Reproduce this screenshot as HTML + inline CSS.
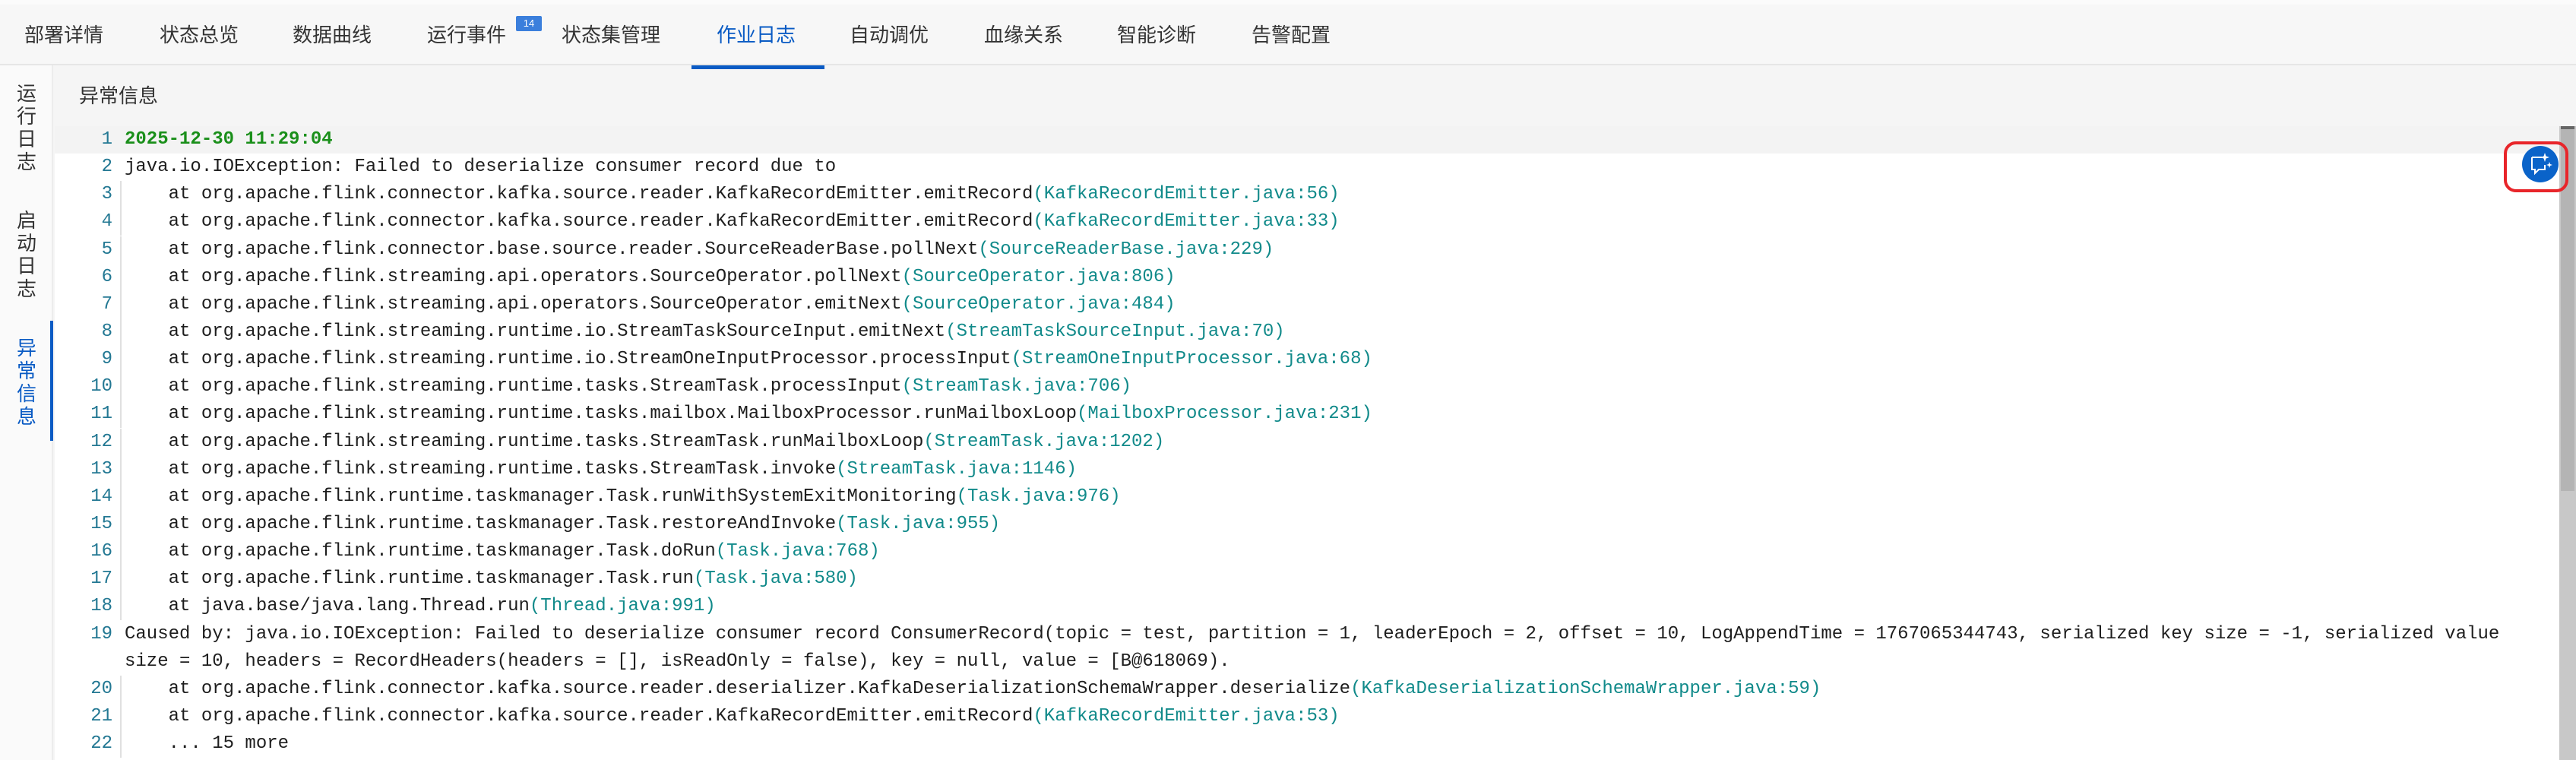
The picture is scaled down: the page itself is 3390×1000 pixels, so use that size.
<!DOCTYPE html>
<html><head><meta charset="utf-8"><style>
*{margin:0;padding:0;box-sizing:border-box}
html,body{width:3390px;height:1000px;overflow:hidden;background:#f5f5f5;font-family:"Liberation Sans","Noto Sans CJK SC",sans-serif}
.tabs{position:absolute;left:0;top:0;width:3390px;height:86px;background:#f7f7f7;border-bottom:2px solid #e6e6e6;border-top:6px solid #fbfbfb}
.tab{position:absolute;top:20px;font-size:26px;color:#333;line-height:40px;white-space:nowrap}
.tab.act{color:#0a5bc4}
.ul{position:absolute;left:910px;top:80px;width:175px;height:5px;background:#0a5bc4}
.badge{position:absolute;left:679px;top:15px;width:34px;height:20px;background:#3b7fdc;color:#fff;font-size:13px;text-align:center;line-height:20px;border-radius:2px}
.side{position:absolute;left:0;top:86px;width:70px;height:914px;background:#fafafa;border-right:2px solid #ececec}
.vt{position:absolute;left:20px;width:30px;font-size:26px;line-height:30px;color:#333;text-align:center}
.vt.act{color:#0a5bc4}
.sbar{position:absolute;left:66px;top:422px;width:4px;height:158px;background:#0a5bc4}
.hdr{position:absolute;left:104px;top:106px;font-size:26px;color:#333;line-height:40px}
.code{position:absolute;left:72px;top:166px;width:3296px;height:834px;background:#fff}
.row{position:absolute;left:0;height:36px;width:3296px;font-family:"Liberation Mono",monospace;font-size:24px;line-height:36px;white-space:pre;color:#1e1e1e}
.n{position:absolute;left:0;width:76px;text-align:right;color:#237893}
.t{position:absolute;left:92px}
.g{position:absolute;left:86px;top:0;width:2px;height:36px;background:#e0e0e0}
.l{color:#118a8a}
.r1{background:#f3f3f3}
.scroll{position:absolute;left:3368px;top:166px;width:22px;height:834px;background:#c8c8c8}
.thumb{position:absolute;left:3370px;top:166px;width:18px;height:480px;background:#b4b4b4;border-top:4px solid #666}
.ai{position:absolute;left:3295px;top:186px;width:85px;height:67px;border:4px solid #e8252a;border-radius:16px}
.aic{position:absolute;left:3319px;top:192px;width:48px;height:48px;border-radius:50%;background:#0a63c9}
</style></head><body>
<div class="tabs">
<span class="tab" style="left:32px">部署详情</span>
<span class="tab" style="left:210px">状态总览</span>
<span class="tab" style="left:385px">数据曲线</span>
<span class="tab" style="left:562px">运行事件</span>
<span class="badge">14</span>
<span class="tab" style="left:739px">状态集管理</span>
<span class="tab act" style="left:943px">作业日志</span>
<span class="tab" style="left:1118px">自动调优</span>
<span class="tab" style="left:1295px">血缘关系</span>
<span class="tab" style="left:1470px">智能诊断</span>
<span class="tab" style="left:1647px">告警配置</span>
<div class="ul"></div>
</div>
<div class="side">
<div class="vt" style="top:22px">运<br>行<br>日<br>志</div>
<div class="vt" style="top:189px">启<br>动<br>日<br>志</div>
<div class="vt act" style="top:357px">异<br>常<br>信<br>息</div>
</div>
<div class="sbar"></div>
<div class="hdr">异常信息</div>
<div class="code">
<div class="row r1" style="top:0px"><span class="n">1</span><span class="t" style="color:#1a8f1a;font-weight:bold">2025-12-30 11:29:04</span></div>
<div class="row" style="top:36.1px"><span class="n">2</span><span class="t">java.io.IOException: Failed to deserialize consumer record due to</span></div>
<div class="row" style="top:72.3px"><span class="n">3</span><span class="g"></span><span class="t">    at org.apache.flink.connector.kafka.source.reader.KafkaRecordEmitter.emitRecord<span class="l">(KafkaRecordEmitter.java:56)</span></span></div>
<div class="row" style="top:108.4px"><span class="n">4</span><span class="g"></span><span class="t">    at org.apache.flink.connector.kafka.source.reader.KafkaRecordEmitter.emitRecord<span class="l">(KafkaRecordEmitter.java:33)</span></span></div>
<div class="row" style="top:144.6px"><span class="n">5</span><span class="g"></span><span class="t">    at org.apache.flink.connector.base.source.reader.SourceReaderBase.pollNext<span class="l">(SourceReaderBase.java:229)</span></span></div>
<div class="row" style="top:180.7px"><span class="n">6</span><span class="g"></span><span class="t">    at org.apache.flink.streaming.api.operators.SourceOperator.pollNext<span class="l">(SourceOperator.java:806)</span></span></div>
<div class="row" style="top:216.8px"><span class="n">7</span><span class="g"></span><span class="t">    at org.apache.flink.streaming.api.operators.SourceOperator.emitNext<span class="l">(SourceOperator.java:484)</span></span></div>
<div class="row" style="top:253px"><span class="n">8</span><span class="g"></span><span class="t">    at org.apache.flink.streaming.runtime.io.StreamTaskSourceInput.emitNext<span class="l">(StreamTaskSourceInput.java:70)</span></span></div>
<div class="row" style="top:289.1px"><span class="n">9</span><span class="g"></span><span class="t">    at org.apache.flink.streaming.runtime.io.StreamOneInputProcessor.processInput<span class="l">(StreamOneInputProcessor.java:68)</span></span></div>
<div class="row" style="top:325.3px"><span class="n">10</span><span class="g"></span><span class="t">    at org.apache.flink.streaming.runtime.tasks.StreamTask.processInput<span class="l">(StreamTask.java:706)</span></span></div>
<div class="row" style="top:361.4px"><span class="n">11</span><span class="g"></span><span class="t">    at org.apache.flink.streaming.runtime.tasks.mailbox.MailboxProcessor.runMailboxLoop<span class="l">(MailboxProcessor.java:231)</span></span></div>
<div class="row" style="top:397.5px"><span class="n">12</span><span class="g"></span><span class="t">    at org.apache.flink.streaming.runtime.tasks.StreamTask.runMailboxLoop<span class="l">(StreamTask.java:1202)</span></span></div>
<div class="row" style="top:433.7px"><span class="n">13</span><span class="g"></span><span class="t">    at org.apache.flink.streaming.runtime.tasks.StreamTask.invoke<span class="l">(StreamTask.java:1146)</span></span></div>
<div class="row" style="top:469.8px"><span class="n">14</span><span class="g"></span><span class="t">    at org.apache.flink.runtime.taskmanager.Task.runWithSystemExitMonitoring<span class="l">(Task.java:976)</span></span></div>
<div class="row" style="top:506px"><span class="n">15</span><span class="g"></span><span class="t">    at org.apache.flink.runtime.taskmanager.Task.restoreAndInvoke<span class="l">(Task.java:955)</span></span></div>
<div class="row" style="top:542.1px"><span class="n">16</span><span class="g"></span><span class="t">    at org.apache.flink.runtime.taskmanager.Task.doRun<span class="l">(Task.java:768)</span></span></div>
<div class="row" style="top:578.2px"><span class="n">17</span><span class="g"></span><span class="t">    at org.apache.flink.runtime.taskmanager.Task.run<span class="l">(Task.java:580)</span></span></div>
<div class="row" style="top:614.4px"><span class="n">18</span><span class="g"></span><span class="t">    at java.base/java.lang.Thread.run<span class="l">(Thread.java:991)</span></span></div>
<div class="row" style="top:650.5px"><span class="n">19</span><span class="t">Caused by: java.io.IOException: Failed to deserialize consumer record ConsumerRecord(topic = test, partition = 1, leaderEpoch = 2, offset = 10, LogAppendTime = 1767065344743, serialized key size = -1, serialized value</span></div>
<div class="row" style="top:686.7px"><span class="t">size = 10, headers = RecordHeaders(headers = [], isReadOnly = false), key = null, value = [B@618069).</span></div>
<div class="row" style="top:722.8px"><span class="n">20</span><span class="g"></span><span class="t">    at org.apache.flink.connector.kafka.source.reader.deserializer.KafkaDeserializationSchemaWrapper.deserialize<span class="l">(KafkaDeserializationSchemaWrapper.java:59)</span></span></div>
<div class="row" style="top:758.9px"><span class="n">21</span><span class="g"></span><span class="t">    at org.apache.flink.connector.kafka.source.reader.KafkaRecordEmitter.emitRecord<span class="l">(KafkaRecordEmitter.java:53)</span></span></div>
<div class="row" style="top:795.1px"><span class="n">22</span><span class="g"></span><span class="t">    ... 15 more</span></div>
</div>
<div class="scroll"></div>
<div class="thumb"></div>
<div class="ai"></div>
<div class="aic"><svg width="48" height="48" viewBox="0 0 48 48"><path d="M13 15h13M13 15v16h4v5l5-5h8v-6" fill="none" stroke="#fff" stroke-width="2"/><path d="M30 9l1.5 4.5L36 15l-4.5 1.5L30 21l-1.5-4.5L24 15l4.5-1.5z" fill="#fff"/><path d="M36 21l1 3 3 1-3 1-1 3-1-3-3-1 3-1z" fill="#fff"/></svg></div>
</body></html>
